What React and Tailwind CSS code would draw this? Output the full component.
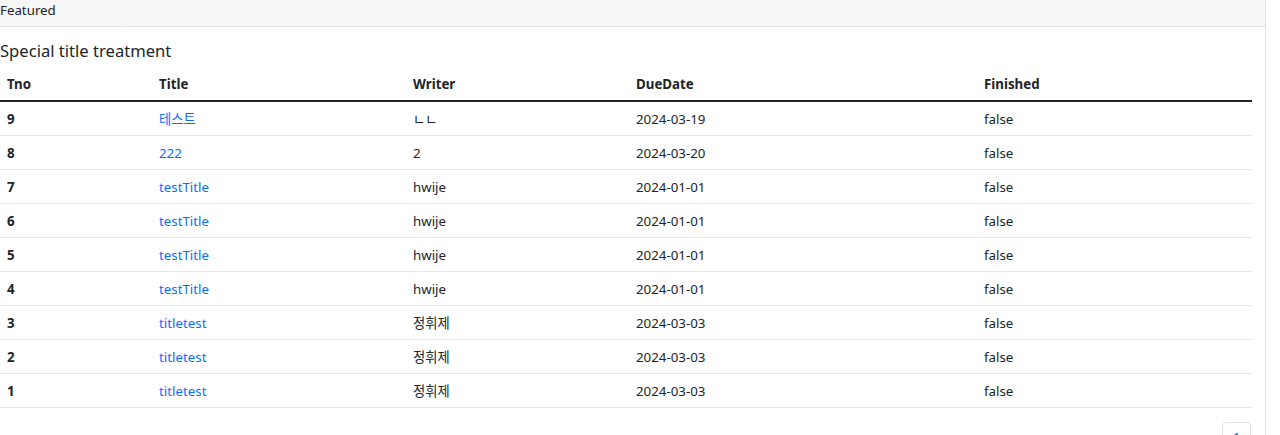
import React from "react";

const rows = [
  { tno: 9, title: "테스트", writer: "ㄴㄴ", due: "2024-03-19" },
  { tno: 8, title: "222", writer: "2", due: "2024-03-20" },
  { tno: 7, title: "testTitle", writer: "hwije", due: "2024-01-01" },
  { tno: 6, title: "testTitle", writer: "hwije", due: "2024-01-01" },
  { tno: 5, title: "testTitle", writer: "hwije", due: "2024-01-01" },
  { tno: 4, title: "testTitle", writer: "hwije", due: "2024-01-01" },
  { tno: 3, title: "titletest", writer: "정휘제", due: "2024-03-03" },
  { tno: 2, title: "titletest", writer: "정휘제", due: "2024-03-03" },
  { tno: 1, title: "titletest", writer: "정휘제", due: "2024-03-03" },
];

const App = () => {
  return (
    <div
      className="w-[1280px] h-[435px] overflow-hidden bg-white text-[#212529] text-[13.3px] leading-[20px]"
      style={{ fontFamily: '"Noto Sans", "Noto Sans CJK KR", sans-serif' }}
    >
      <div className="w-[1266px] border-r border-[#e2e2e2]">
        <div className="h-[27px] bg-[#f7f7f7] border-b border-[#e4e4e4] flex items-start">
          <span className="leading-[20px]">Featured</span>
        </div>

        <div className="pr-[14px] pt-[14px]">
          <h5 className="text-[16.6px] leading-[20px] mb-[6px]">
            Special title treatment
          </h5>

          <table className="w-[1252px] table-fixed border-collapse text-left">
            <colgroup>
              <col className="w-[152px]" />
              <col className="w-[254px]" />
              <col className="w-[223px]" />
              <col className="w-[348px]" />
              <col />
            </colgroup>
            <thead>
              <tr className="border-b-2 border-[#212529]">
                <th className="px-[7px] py-[6.5px] font-bold">Tno</th>
                <th className="px-[7px] py-[6.5px] font-bold">Title</th>
                <th className="px-[7px] py-[6.5px] font-bold">Writer</th>
                <th className="px-[7px] py-[6.5px] font-bold">DueDate</th>
                <th className="px-[7px] py-[6.5px] font-bold">Finished</th>
              </tr>
            </thead>
            <tbody>
              {rows.map((r) => (
                <tr key={r.tno} className="border-b border-[#e5e7eb]">
                  <th className="px-[7px] pt-[6.8px] pb-[6.2px] font-bold">{r.tno}</th>
                  <td className="px-[7px] pt-[6.8px] pb-[6.2px]">
                    <a className="text-[#0d6efd]">{r.title}</a>
                  </td>
                  <td className="px-[7px] pt-[6.8px] pb-[6.2px]">{r.writer}</td>
                  <td className="px-[7px] pt-[6.8px] pb-[6.2px]">{r.due}</td>
                  <td className="px-[7px] pt-[6.8px] pb-[6.2px]">false</td>
                </tr>
              ))}
            </tbody>
          </table>

          <div className="flex justify-end mt-[14px]">
            <button className="w-[29px] h-[34px] border border-[#dee2e6] rounded-[4px] text-[#0d6efd] pt-[4px] flex justify-center items-start">
              1
            </button>
          </div>
        </div>
      </div>
    </div>
  );
};

export default App;
